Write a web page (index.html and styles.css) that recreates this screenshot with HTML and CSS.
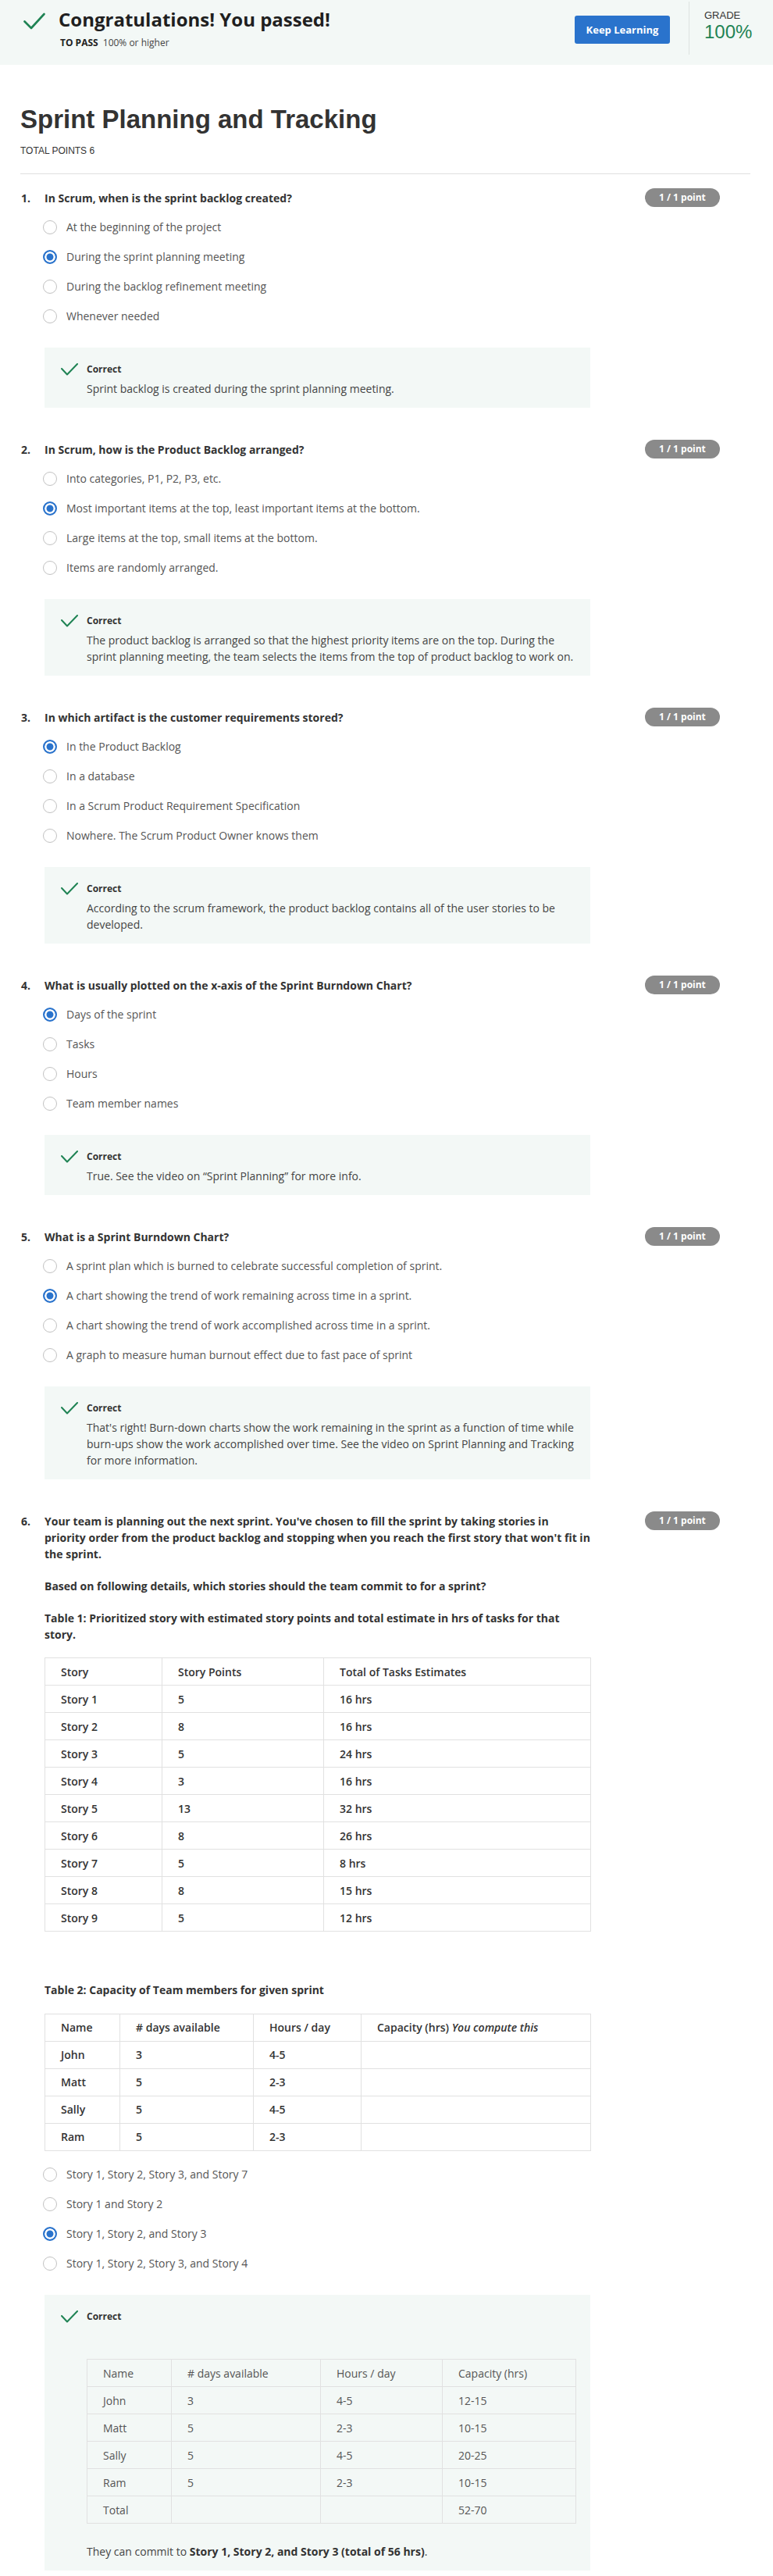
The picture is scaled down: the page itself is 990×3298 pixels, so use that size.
FILE: index.html
```html
<!DOCTYPE html>
<html lang="en">
<head>
<meta charset="utf-8">
<title>Sprint Planning and Tracking</title>
<link rel="stylesheet" href="styles.css">
</head>
<body>
<header class="banner">
  <svg class="banner-check" viewBox="0 0 28 22" aria-hidden="true"><path d="M1.5 11.5 L10 20 L26.5 2" fill="none" stroke="#1f8354" stroke-width="2.6" stroke-linecap="round" stroke-linejoin="round"/></svg>
  <div class="banner-text">
    <h2 class="passed">Congratulations! You passed!</h2>
    <div class="topass"><b>TO PASS</b> 100% or higher</div>
  </div>
  <a class="btn" href="#">Keep Learning</a>
  <div class="divider"></div>
  <div class="grade">
    <div class="grade-label">GRADE</div>
    <div class="grade-value">100%</div>
  </div>
</header>

<main class="content">
  <h1>Sprint Planning and Tracking</h1>
  <div class="total">TOTAL POINTS 6</div>
  <hr>

  <div class="quiz">
    <section class="q">
      <div class="qnum">1.</div>
      <div class="qbody">
        <div class="qtext"><p>In Scrum, when is the sprint backlog created?</p></div>
        <ul class="opts">
          <li class="opt"><span class="radio"></span>At the beginning of the project</li>
          <li class="opt"><span class="radio on"></span>During the sprint planning meeting</li>
          <li class="opt"><span class="radio"></span>During the backlog refinement meeting</li>
          <li class="opt"><span class="radio"></span>Whenever needed</li>
        </ul>
        <div class="fb">
          <svg class="fb-check" viewBox="0 0 22 16" aria-hidden="true"><path d="M1 7 L8 14.5 L21 1" fill="none" stroke="#1f8354" stroke-width="2" stroke-linecap="round" stroke-linejoin="round"/></svg>
          <div>
            <div class="fb-title">Correct</div>
            <p class="fb-text">Sprint backlog is created during the sprint planning meeting.</p>
          </div>
        </div>
      </div>
      <div class="badge">1 / 1 point</div>
    </section>

    <section class="q">
      <div class="qnum">2.</div>
      <div class="qbody">
        <div class="qtext"><p>In Scrum, how is the Product Backlog arranged?</p></div>
        <ul class="opts">
          <li class="opt"><span class="radio"></span>Into categories, P1, P2, P3, etc.</li>
          <li class="opt"><span class="radio on"></span>Most important items at the top, least important items at the bottom.</li>
          <li class="opt"><span class="radio"></span>Large items at the top, small items at the bottom.</li>
          <li class="opt"><span class="radio"></span>Items are randomly arranged.</li>
        </ul>
        <div class="fb">
          <svg class="fb-check" viewBox="0 0 22 16" aria-hidden="true"><path d="M1 7 L8 14.5 L21 1" fill="none" stroke="#1f8354" stroke-width="2" stroke-linecap="round" stroke-linejoin="round"/></svg>
          <div>
            <div class="fb-title">Correct</div>
            <p class="fb-text">The product backlog is arranged so that the highest priority items are on the top. During the sprint planning meeting, the team selects the items from the top of product backlog to work on.</p>
          </div>
        </div>
      </div>
      <div class="badge">1 / 1 point</div>
    </section>

    <section class="q">
      <div class="qnum">3.</div>
      <div class="qbody">
        <div class="qtext"><p>In which artifact is the customer requirements stored?</p></div>
        <ul class="opts">
          <li class="opt"><span class="radio on"></span>In the Product Backlog</li>
          <li class="opt"><span class="radio"></span>In a database</li>
          <li class="opt"><span class="radio"></span>In a Scrum Product Requirement Specification</li>
          <li class="opt"><span class="radio"></span>Nowhere. The Scrum Product Owner knows them</li>
        </ul>
        <div class="fb">
          <svg class="fb-check" viewBox="0 0 22 16" aria-hidden="true"><path d="M1 7 L8 14.5 L21 1" fill="none" stroke="#1f8354" stroke-width="2" stroke-linecap="round" stroke-linejoin="round"/></svg>
          <div>
            <div class="fb-title">Correct</div>
            <p class="fb-text">According to the scrum framework, the product backlog contains all of the user stories to be developed.</p>
          </div>
        </div>
      </div>
      <div class="badge">1 / 1 point</div>
    </section>

    <section class="q">
      <div class="qnum">4.</div>
      <div class="qbody">
        <div class="qtext"><p>What is usually plotted on the x-axis of the Sprint Burndown Chart?</p></div>
        <ul class="opts">
          <li class="opt"><span class="radio on"></span>Days of the sprint</li>
          <li class="opt"><span class="radio"></span>Tasks</li>
          <li class="opt"><span class="radio"></span>Hours</li>
          <li class="opt"><span class="radio"></span>Team member names</li>
        </ul>
        <div class="fb">
          <svg class="fb-check" viewBox="0 0 22 16" aria-hidden="true"><path d="M1 7 L8 14.5 L21 1" fill="none" stroke="#1f8354" stroke-width="2" stroke-linecap="round" stroke-linejoin="round"/></svg>
          <div>
            <div class="fb-title">Correct</div>
            <p class="fb-text">True. See the video on “Sprint Planning” for more info.</p>
          </div>
        </div>
      </div>
      <div class="badge">1 / 1 point</div>
    </section>

    <section class="q">
      <div class="qnum">5.</div>
      <div class="qbody">
        <div class="qtext"><p>What is a Sprint Burndown Chart?</p></div>
        <ul class="opts">
          <li class="opt"><span class="radio"></span>A sprint plan which is burned to celebrate successful completion of sprint.</li>
          <li class="opt"><span class="radio on"></span>A chart showing the trend of work remaining across time in a sprint.</li>
          <li class="opt"><span class="radio"></span>A chart showing the trend of work accomplished across time in a sprint.</li>
          <li class="opt"><span class="radio"></span>A graph to measure human burnout effect due to fast pace of sprint</li>
        </ul>
        <div class="fb">
          <svg class="fb-check" viewBox="0 0 22 16" aria-hidden="true"><path d="M1 7 L8 14.5 L21 1" fill="none" stroke="#1f8354" stroke-width="2" stroke-linecap="round" stroke-linejoin="round"/></svg>
          <div>
            <div class="fb-title">Correct</div>
            <p class="fb-text">That's right! Burn-down charts show the work remaining in the sprint as a function of time while burn-ups show the work accomplished over time. See the video on Sprint Planning and Tracking for more information.</p>
          </div>
        </div>
      </div>
      <div class="badge">1 / 1 point</div>
    </section>

    <section class="q">
      <div class="qnum">6.</div>
      <div class="qbody">
        <div class="qtext">
          <p>Your team is planning out the next sprint. You've chosen to fill the sprint by taking stories in priority order from the product backlog and stopping when you reach the first story that won't fit in the sprint.</p>
          <p>Based on following details, which stories should the team commit to for a sprint?</p>
          <p>Table 1: Prioritized story with estimated story points and total estimate in hrs of tasks for that story.</p>
        </div>
        <table class="tbl t1">
          <colgroup><col class="c150"><col class="c207"><col></colgroup>
          <tr><td>Story</td><td>Story Points</td><td>Total of Tasks Estimates</td></tr>
          <tr><td>Story 1</td><td>5</td><td>16 hrs</td></tr>
          <tr><td>Story 2</td><td>8</td><td>16 hrs</td></tr>
          <tr><td>Story 3</td><td>5</td><td>24 hrs</td></tr>
          <tr><td>Story 4</td><td>3</td><td>16 hrs</td></tr>
          <tr><td>Story 5</td><td>13</td><td>32 hrs</td></tr>
          <tr><td>Story 6</td><td>8</td><td>26 hrs</td></tr>
          <tr><td>Story 7</td><td>5</td><td>8 hrs</td></tr>
          <tr><td>Story 8</td><td>8</td><td>15 hrs</td></tr>
          <tr><td>Story 9</td><td>5</td><td>12 hrs</td></tr>
        </table>
        <div class="qtext t2-title"><p>Table 2: Capacity of Team members for given sprint</p></div>
        <table class="tbl t2">
          <colgroup><col class="c96"><col class="c171"><col class="c138"><col></colgroup>
          <tr><td>Name</td><td># days available</td><td>Hours / day</td><td>Capacity (hrs) <em>You compute this</em></td></tr>
          <tr><td>John</td><td>3</td><td>4-5</td><td></td></tr>
          <tr><td>Matt</td><td>5</td><td>2-3</td><td></td></tr>
          <tr><td>Sally</td><td>5</td><td>4-5</td><td></td></tr>
          <tr><td>Ram</td><td>5</td><td>2-3</td><td></td></tr>
        </table>
        <ul class="opts after-table">
          <li class="opt"><span class="radio"></span>Story 1, Story 2, Story 3, and Story 7</li>
          <li class="opt"><span class="radio"></span>Story 1 and Story 2</li>
          <li class="opt"><span class="radio on"></span>Story 1, Story 2, and Story 3</li>
          <li class="opt"><span class="radio"></span>Story 1, Story 2, Story 3, and Story 4</li>
        </ul>
        <div class="fb">
          <svg class="fb-check" viewBox="0 0 22 16" aria-hidden="true"><path d="M1 7 L8 14.5 L21 1" fill="none" stroke="#1f8354" stroke-width="2" stroke-linecap="round" stroke-linejoin="round"/></svg>
          <div>
            <div class="fb-title">Correct</div>
            <table class="tbl inner">
              <colgroup><col class="c108"><col class="c191"><col class="c156"><col></colgroup>
              <tr><td>Name</td><td># days available</td><td>Hours / day</td><td>Capacity (hrs)</td></tr>
              <tr><td>John</td><td>3</td><td>4-5</td><td>12-15</td></tr>
              <tr><td>Matt</td><td>5</td><td>2-3</td><td>10-15</td></tr>
              <tr><td>Sally</td><td>5</td><td>4-5</td><td>20-25</td></tr>
              <tr><td>Ram</td><td>5</td><td>2-3</td><td>10-15</td></tr>
              <tr><td>Total</td><td></td><td></td><td>52-70</td></tr>
            </table>
            <p class="fb-text fb-final">They can commit to <strong>Story 1, Story 2, and Story 3 (total of 56 hrs)</strong>.</p>
          </div>
        </div>
      </div>
      <div class="badge">1 / 1 point</div>
    </section>
  </div>
</main>
</body>
</html>
```

FILE: styles.css
```css
* { box-sizing: border-box; }

body {
  margin: 0;
  font-family: "Open Sans", "Noto Sans", sans-serif;
  color: #333;
  background: #fff;
}

/* ---------- banner ---------- */
.banner {
  display: flex;
  align-items: flex-start;
  height: 83px;
  background: #f3f8f6;
}
.banner-check {
  flex: none;
  width: 28px;
  height: 22px;
  margin: 16px 0 0 30px;
}
.banner-text {
  margin-left: 17px;
  padding-top: 10px;
}
.passed {
  margin: 0;
  font-size: 24px;
  line-height: 30px;
  font-weight: 700;
  color: #1f1f1f;
}
.topass {
  margin-top: 7px;
  margin-left: 2px;
  font-size: 12px;
  line-height: 16px;
  color: #444;
}
.topass b {
  font-weight: 700;
  color: #222;
  margin-right: 3px;
}
.btn {
  flex: none;
  margin: 20px 0 0 auto;
  width: 122px;
  height: 36px;
  display: flex;
  align-items: center;
  justify-content: center;
  background: #2a73cc;
  color: #fff;
  font-weight: 700;
  font-size: 13px;
  border-radius: 3px;
  text-decoration: none;
}
.divider {
  flex: none;
  width: 1px;
  height: 68px;
  margin: 2px 0 0 24px;
  background: #dde3e0;
}
.grade {
  flex: none;
  width: 88px;
  margin-left: 19px;
  padding-top: 12px;
  font-family: "Liberation Sans", Arial, sans-serif;
}
.grade-label {
  font-size: 13px;
  line-height: 15px;
  color: #333;
}
.grade-value {
  font-size: 24px;
  line-height: 28px;
  color: #1f8354;
}

/* ---------- content ---------- */
.content {
  padding: 0 29px 8px 26px;
}
h1 {
  margin: 50px 0 0;
  font-family: "Liberation Sans", Arial, sans-serif;
  font-weight: 700;
  font-size: 33px;
  line-height: 40px;
  color: #333;
}
.total {
  margin-top: 12px;
  font-family: "Liberation Sans", Arial, sans-serif;
  font-size: 12px;
  line-height: 16px;
  color: #333;
}
hr {
  margin: 21px 0 0;
  border: 0;
  border-top: 1px solid #e0e0e0;
}

.quiz {
  display: flex;
  flex-direction: column;
  gap: 42.5px;
  padding-top: 19.5px;
}
.q {
  display: grid;
  grid-template-columns: 31px 699px auto;
  align-items: start;
}
.qnum {
  padding-left: 1px;
  font-weight: 700;
  font-size: 14px;
  line-height: 21px;
  color: #333;
}
.qtext p {
  margin: 0;
  font-weight: 700;
  font-size: 14px;
  line-height: 21px;
  color: #333;
}
.qtext p + p {
  margin-top: 20px;
}
.badge {
  justify-self: start;
  margin: -1.5px 0 0 70px;
  height: 24px;
  padding: 0 18px;
  border-radius: 12px;
  background: #8a8a8a;
  color: #fff;
  font-weight: 700;
  font-size: 12px;
  line-height: 24px;
  white-space: nowrap;
}

.opts {
  list-style: none;
  margin: 8px 0 0;
  padding: 0;
}
.opts.after-table {
  margin-top: 11px;
}
.opt {
  height: 38px;
  display: flex;
  align-items: center;
  font-size: 14px;
  color: #555;
}
.radio {
  flex: none;
  width: 18px;
  height: 18px;
  margin: 0 12px 0 -2px;
  border: 1.5px solid #c2c2c2;
  border-radius: 50%;
  background: #fff;
}
.radio.on {
  border: 2px solid #2a73cc;
  background: #2a73cc;
  box-shadow: inset 0 0 0 2.5px #fff;
}

/* ---------- feedback ---------- */
.fb {
  margin-top: 21.5px;
  display: grid;
  grid-template-columns: 33px 1fr;
  padding: 18px 16px 14px 21px;
  background: #f3f8f6;
}
.fb-check {
  width: 22px;
  height: 16px;
  margin-top: 2px;
}
.fb-title {
  font-weight: 700;
  font-size: 12px;
  line-height: 20px;
  color: #333;
}
.fb-text {
  margin: 4px 0 0;
  font-size: 14px;
  line-height: 21px;
  color: #444;
}
.fb-text strong {
  font-weight: 700;
  color: #333;
}
.fb-final {
  margin-top: 25px;
}

/* ---------- tables ---------- */
.tbl {
  border-collapse: collapse;
  table-layout: fixed;
  font-size: 14px;
  color: #333;
}
.tbl td {
  height: 35px;
  padding: 0 20px;
  border: 1px solid #e1e1e1;
  line-height: 21px;
  font-weight: 600;
  vertical-align: middle;
  white-space: nowrap;
}
.tbl em {
  font-style: italic;
}
.t1, .t2 {
  width: 700px;
  margin-top: 19.5px;
}
.t2-title {
  margin-top: 64px;
}
.inner {
  width: 627px;
  margin-top: 44px;
  color: #555;
}
.inner td {
  font-weight: 400;
}
.c150 { width: 150px; }
.c207 { width: 207px; }
.c96 { width: 96px; }
.c171 { width: 171px; }
.c138 { width: 138px; }
.c108 { width: 108px; }
.c191 { width: 191px; }
.c156 { width: 156px; }
```
